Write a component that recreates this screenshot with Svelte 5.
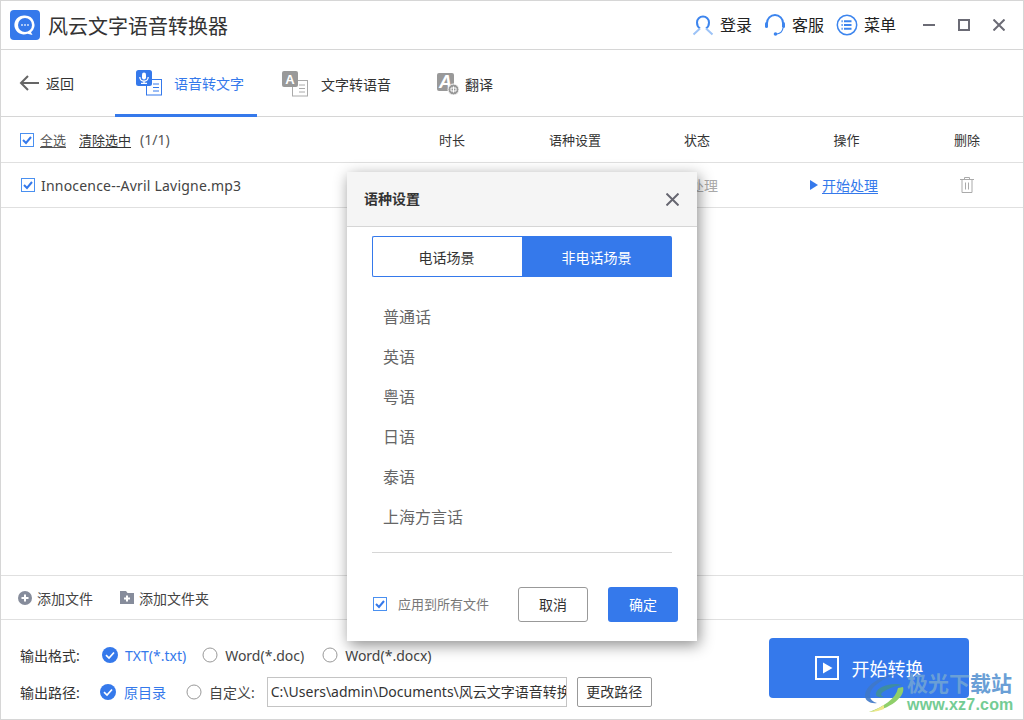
<script lang="ts">
  const languages = ["普通话", "英语", "粤语", "日语", "泰语", "上海方言话"];
</script>

{#snippet check()}
  <svg class="check" viewBox="0 0 14 14" width="14" height="14">
    <rect x="0.5" y="0.5" width="13" height="13" fill="#fff" stroke="#4a90f0" />
    <path d="M3 7l3 3 5-6" fill="none" stroke="#3579eb" stroke-width="2" />
  </svg>
{/snippet}

{#snippet radioOn()}
  <svg viewBox="0 0 16 16" width="16" height="16">
    <circle cx="8" cy="8" r="8" fill="#3579eb" />
    <path d="M4 8.200l3 2.800 5-5.500" fill="none" stroke="#fff" stroke-width="1.700" />
  </svg>
{/snippet}

{#snippet radioOff()}
  <svg viewBox="0 0 16 16" width="16" height="16">
    <circle cx="8" cy="8" r="7" fill="#fff" stroke="#999" />
  </svg>
{/snippet}

<div class="app">
  <header class="titlebar">
    <svg class="logo" viewBox="0 0 30 30" width="30" height="30">
      <rect width="30" height="30" rx="4" fill="#3579eb" />
      <path d="M15 5.500a9.500 9.500 0 0 1 6 16.800l1.500 2.700-5-1.300A9.500 9.500 0 1 1 15 5.500z" fill="#fff" />
      <circle cx="15" cy="15" r="7" fill="#3579eb" />
      <circle cx="12" cy="15" r="1" fill="#cfe0fb" />
      <circle cx="15" cy="15" r="1" fill="#cfe0fb" />
      <circle cx="18" cy="15" r="1" fill="#cfe0fb" />
    </svg>
    <h1>风云文字语音转换器</h1>
    <div class="account">
      <span class="acct">
        <svg viewBox="0 0 22 22" width="22" height="22" fill="none" stroke="#3d85ee" stroke-width="2">
          <path d="M8 14.500C5.500 12.800 5 10.500 5 8.500a6 6 0 0 1 12 0c0 2-.5 4.300-3 6" />
          <path d="M8 14.500 1.500 20.500M14 14.500l6.500 6" stroke="#9cc3f7" />
        </svg>
        <span>登录</span>
      </span>
      <span class="acct">
        <svg viewBox="0 0 22 22" width="22" height="22" fill="none" stroke="#3d85ee" stroke-width="2">
          <path d="M3 11V9a8 8 0 0 1 16 0v2" />
          <rect x="1" y="8" width="3" height="6" rx="1.500" fill="#3d85ee" stroke="none" />
          <rect x="18" y="8" width="3" height="6" rx="1.500" fill="#3d85ee" stroke="none" />
          <path d="M19 14c-.5 3.500-3 5.500-6 6" stroke-width="1.200" />
          <circle cx="11.500" cy="20" r="1.800" fill="#3d85ee" stroke="none" />
        </svg>
        <span>客服</span>
      </span>
      <span class="acct">
        <svg viewBox="0 0 22 22" width="22" height="22" fill="none" stroke="#3d85ee" stroke-width="1.500">
          <circle cx="11" cy="11" r="9.700" />
          <path d="M8 7.200h7.500M8 11h7.500M8 14.800h7.500M5.500 7.200h1.200M5.500 11h1.200M5.500 14.800h1.200" stroke-width="2" />
        </svg>
        <span>菜单</span>
      </span>
    </div>
    <div class="winbtns">
      <svg viewBox="0 0 12 12" width="12" height="12"><path d="M0 6h12" stroke="#6b6b75" stroke-width="2" /></svg>
      <svg viewBox="0 0 12 12" width="12" height="12"><rect x="1" y="1" width="10" height="10" fill="none" stroke="#6b6b75" stroke-width="2" /></svg>
      <svg viewBox="0 0 12 12" width="12" height="12"><path d="M.5.500l11 11M11.500.500l-11 11" stroke="#6b6b75" stroke-width="2" /></svg>
    </div>
  </header>

  <nav class="tabs">
    <div class="back">
      <svg viewBox="0 0 20 16" width="20" height="16" fill="none" stroke="#666" stroke-width="2">
        <path d="M20 8H2M9 1 2 8l7 7" />
      </svg>
      <span>返回</span>
    </div>
    <div class="tab active">
      <svg viewBox="0 0 26 26" width="26" height="26">
        <rect x="10.500" y="9.500" width="15" height="15.500" fill="#fff" stroke="#3579eb" />
        <path d="M17 14h6M17 17.500h6M17 21h6" stroke="#3579eb" />
        <rect width="16" height="16" rx="2.500" fill="#3579eb" />
        <rect x="6" y="2.500" width="4" height="7" rx="2" fill="#fff" />
        <path d="M3.800 7a4.200 4.200 0 0 0 8.400 0M8 11v2M5 13.300h6" fill="none" stroke="#fff" stroke-width="1.300" />
      </svg>
      <span>语音转文字</span>
    </div>
    <div class="tab second">
      <svg viewBox="0 0 26 26" width="26" height="26">
        <rect x="10.500" y="9.500" width="15" height="15.500" fill="#fff" stroke="#aaa" />
        <path d="M17 14h6M17 17.500h6M17 21h6" stroke="#aaa" />
        <rect width="16" height="16" rx="2" fill="#999" />
        <text x="8" y="12.500" class="glyph">A</text>
      </svg>
      <span>文字转语音</span>
    </div>
    <div class="tab third">
      <svg viewBox="0 0 22 22" width="22" height="22">
        <rect width="17" height="18" rx="2" fill="#999" />
        <text x="8.500" y="15" class="glyph big">A</text>
        <circle cx="16.500" cy="16.500" r="5.500" fill="#999" stroke="#fff" />
        <path d="M14 15h5v3h-5zM16.500 13.500v6" fill="none" stroke="#fff" />
      </svg>
      <span>翻译</span>
    </div>
  </nav>

  <div class="grid head">
    <div class="select">
      {@render check()}
      <u class="all">全选</u>
      <u class="clear">清除选中</u>
      <span class="count">(1/1)</span>
    </div>
    <span>时长</span>
    <span>语种设置</span>
    <span>状态</span>
    <span>操作</span>
    <span>删除</span>
  </div>

  <div class="grid row">
    <div class="file">
      {@render check()}
      <span>Innocence--Avril Lavigne.mp3</span>
    </div>
    <span></span>
    <span></span>
    <span class="status">待处理</span>
    <span class="action"><i class="tri"></i><u>开始处理</u></span>
    <span class="trash">
      <svg viewBox="0 0 14 16" width="14" height="16" fill="none" stroke="#aaa">
        <path d="M0 2.500h14M4.500 2.500V.5h5v2M2 2.500v13h10v-13M5.500 5.500v7M8.500 5.500v7" />
      </svg>
    </span>
  </div>

  <div class="spacer"></div>

  <div class="addbar">
    <span class="add">
      <svg viewBox="0 0 14 14" width="14" height="14">
        <circle cx="7" cy="7" r="7" fill="#868c9b" />
        <path d="M3.500 7h7M7 3.500v7" stroke="#fff" stroke-width="2" />
      </svg>
      添加文件
    </span>
    <span class="add">
      <svg viewBox="0 0 14 13" width="14" height="13">
        <path d="M0 0h6l1.500 2H14v11H0z" fill="#868c9b" />
        <path d="M4 7.500h6M7 4.500v6" stroke="#fff" stroke-width="2" />
      </svg>
      添加文件夹
    </span>
  </div>

  <footer class="output">
    <div class="settings">
      <div class="line format">
        <span class="label">输出格式:</span>
        <span class="opt on">{@render radioOn()}TXT(*.txt)</span>
        <span class="opt">{@render radioOff()}Word(*.doc)</span>
        <span class="opt">{@render radioOff()}Word(*.docx)</span>
      </div>
      <div class="line path">
        <span class="label">输出路径:</span>
        <span class="opt on">{@render radioOn()}原目录</span>
        <span class="opt">{@render radioOff()}自定义:</span>
        <div class="pathbox">C:\Users\admin\Documents\风云文字语音转换器</div>
        <button class="change">更改路径</button>
      </div>
    </div>
    <button class="start">
      <svg viewBox="0 0 24 24" width="24" height="24" fill="none">
        <rect x="1" y="1" width="22" height="22" stroke="#fff" stroke-width="2" />
        <path d="M8 6.500v11l9.500-5.500z" fill="#fff" />
      </svg>
      开始转换
    </button>
  </footer>

  <div class="dialog">
    <div class="dialog-head">
      <strong>语种设置</strong>
      <svg viewBox="0 0 12 12" width="13" height="13"><path d="M.5.500l11 11M11.500.500l-11 11" stroke="#666670" stroke-width="1.800" /></svg>
    </div>
    <div class="scene">
      <span>电话场景</span>
      <span class="current">非电话场景</span>
    </div>
    <ul>
      {#each languages as lang}
        <li>{lang}</li>
      {/each}
    </ul>
    <div class="dialog-foot">
      {@render check()}
      <span class="apply">应用到所有文件</span>
      <button class="cancel">取消</button>
      <button class="ok">确定</button>
    </div>
  </div>

  <div class="watermark">
    <svg viewBox="0 0 42 40" width="42" height="40">
      <path d="M33 1C19 2 2 11 1 22c-.5 6 6 9 12 8-6-2-9-6-6-12C11 10 23 4 33 1z" fill="#3f78c8" opacity=".9" />
      <path d="M38 12c-9-3-24 1-26 8-1 4 4 5 8 4-3-1-4-3-1-5 4-3 12-6 19-7z" fill="#3f8f9a" opacity=".9" />
      <path d="M39 14c3 9-13 23-34 25 14-5 27-13 29-24z" fill="#8fcf6a" />
      <path d="M20 32c-5 3-10 6-15 7 5 0 10-1 15-3z" fill="#efe88a" />
    </svg>
    <div class="mark-text">
      <b>极光下载站</b>
      <em>www.xz7.com</em>
    </div>
  </div>
</div>

<style>
  :global(body) {
    margin: 0;
    background: #fff;
  }

  .app {
    position: relative;
    box-sizing: border-box;
    width: 1024px;
    height: 720px;
    overflow: hidden;
    display: flex;
    flex-direction: column;
    border: 1px solid #d6d6d6;
    font-family: "Noto Sans", "Noto Sans CJK SC", sans-serif;
    font-size: 14px;
    color: #333;
    background: #fff;
  }

  svg {
    flex: none;
    display: block;
  }

  u {
    text-underline-offset: 2px;
  }

  .titlebar {
    height: 48px;
    flex: none;
    display: flex;
    align-items: center;
    padding-left: 9px;
    border-bottom: 1px solid #d6d6d6;
  }

  .logo {
    margin-top: -1px;
  }

  h1 {
    margin: 0 0 0 8px;
    font-size: 20px;
    font-weight: 400;
    color: #333;
  }

  .account {
    margin-left: auto;
    display: flex;
    gap: 12px;
    font-size: 16px;
    color: #222;
  }

  .acct {
    display: flex;
    align-items: center;
    gap: 6px;
  }

  .acct span {
    padding-bottom: 2px;
  }

  .winbtns {
    margin-left: 27px;
    margin-right: 18px;
    display: flex;
    gap: 23px;
  }

  .tabs {
    height: 67px;
    flex: none;
    display: flex;
    align-items: stretch;
    border-bottom: 1px solid #d6d6d6;
    box-sizing: border-box;
  }

  .back {
    width: 114px;
    box-sizing: border-box;
    padding-left: 18px;
    display: flex;
    align-items: center;
    gap: 7px;
  }

  .tab {
    display: flex;
    align-items: center;
    gap: 13px;
    box-sizing: border-box;
    padding-top: 2px;
  }

  .active {
    width: 142px;
    padding-left: 21px;
    gap: 12px;
    color: #3579eb;
    border-bottom: 3px solid #3579eb;
    margin-bottom: -1px;
    height: 67px;
  }

  .second {
    margin-left: 25px;
  }

  .third {
    margin-left: 46px;
    gap: 6px;
  }

  .glyph {
    font-family: "Liberation Sans", sans-serif;
    font-size: 13px;
    font-weight: 700;
    fill: #fff;
    text-anchor: middle;
  }

  .glyph.big {
    font-size: 18px;
    font-style: italic;
  }

  .grid {
    display: grid;
    grid-template-columns: 391px 120px 126px 118px 181px 60px;
    align-items: center;
    justify-items: center;
    flex: none;
    border-bottom: 1px solid #e0e0e0;
    font-size: 13px;
  }

  .head {
    height: 45px;
  }

  .row {
    height: 44px;
  }

  .select,
  .file {
    justify-self: start;
    display: flex;
    align-items: center;
  }

  .select {
    padding-left: 19px;
  }

  .all {
    margin-left: 6px;
    color: #555;
  }

  .clear {
    margin-left: 13px;
  }

  .count {
    margin-left: 9px;
    color: #555;
    font-size: 14px;
  }

  .file {
    padding-left: 20px;
    gap: 6px;
    font-size: 14px;
    letter-spacing: 0.2px;
    color: #444;
  }

  .status {
    color: #aaa;
    font-size: 14px;
  }

  .action {
    display: flex;
    align-items: center;
    gap: 4px;
    font-size: 14px;
    color: #3579eb;
    padding-right: 5px;
  }

  .tri {
    width: 0;
    height: 0;
    border-left: 8px solid #3579eb;
    border-top: 5px solid transparent;
    border-bottom: 5px solid transparent;
  }

  .spacer {
    flex: 1;
  }

  .addbar {
    height: 45px;
    flex: none;
    box-sizing: border-box;
    display: flex;
    align-items: center;
    gap: 27px;
    padding-left: 17px;
    border-top: 1px solid #e0e0e0;
    border-bottom: 1px solid #e0e0e0;
    color: #444;
  }

  .add {
    display: flex;
    align-items: center;
    gap: 5px;
  }

  .output {
    height: 99px;
    flex: none;
    display: flex;
    align-items: flex-start;
  }

  .settings {
    padding: 20px 0 0 19px;
  }

  .line {
    display: flex;
    align-items: center;
    height: 30px;
  }

  .path {
    margin-top: 7px;
  }

  .label {
    width: 60px;
    color: #333;
  }

  .opt {
    display: flex;
    align-items: center;
    gap: 7px;
    color: #444;
  }

  .on {
    color: #3579eb;
  }

  .format .opt {
    margin-left: 22px;
  }

  .format .opt + .opt {
    margin-left: 16px;
  }

  .format .opt:last-child {
    margin-left: 18px;
  }

  .path .on {
    gap: 8px;
    margin-left: 20px;
  }

  .path .opt + .opt {
    margin-left: 20px;
  }

  .pathbox {
    box-sizing: border-box;
    width: 300px;
    height: 30px;
    margin-left: 12px;
    padding: 0 3px;
    line-height: 28px;
    white-space: nowrap;
    overflow: hidden;
    border: 1px solid #c4c4c4;
    color: #333;
  }

  button {
    font: inherit;
    cursor: pointer;
  }

  .change {
    width: 75px;
    height: 30px;
    margin-left: 10px;
    padding: 0 0 2px;
    background: #fff;
    color: #333;
    border: 1px solid #999;
    border-radius: 2px;
  }

  .start {
    width: 200px;
    height: 60px;
    margin: 18px 54px 0 auto;
    display: flex;
    align-items: center;
    justify-content: center;
    gap: 13px;
    background: #3579eb;
    color: #fff;
    border: 0;
    border-radius: 4px;
    font-size: 18px;
  }

  .dialog {
    position: absolute;
    left: 346px;
    top: 171px;
    width: 350px;
    height: 469px;
    background: #fff;
    box-shadow: 2px 4px 14px rgba(0, 0, 0, 0.45);
    display: flex;
    flex-direction: column;
  }

  .dialog-head {
    height: 54px;
    flex: none;
    display: flex;
    align-items: center;
    justify-content: space-between;
    padding: 0 18px 0 17px;
    background: #f5f5f5;
    border-bottom: 1px solid #d6d6d6;
    color: #333;
  }

  .dialog-head strong {
    padding-bottom: 2px;
  }

  .scene {
    margin: 9px 25px 0;
    height: 41px;
    flex: none;
    display: grid;
    grid-template-columns: 150px 150px;
    box-sizing: border-box;
  }

  .scene span {
    display: flex;
    align-items: center;
    justify-content: center;
    box-sizing: border-box;
    padding-right: 2px;
    border: 1px solid #3579eb;
    border-right: 0;
    border-radius: 2px 0 0 2px;
  }

  .scene .current {
    background: #3579eb;
    color: #fff;
    border-radius: 0 2px 0 0;
  }

  ul {
    list-style: none;
    margin: 21px 25px 0;
    padding: 0 0 14px 11px;
    flex: none;
    border-bottom: 1px solid #d6d6d6;
    font-size: 16px;
    color: #666;
  }

  li {
    height: 40px;
    line-height: 39px;
  }

  .dialog-foot {
    display: flex;
    align-items: center;
    margin-top: 34px;
    padding-left: 26px;
  }

  .dialog-foot .check {
    margin-bottom: 2px;
  }

  .apply {
    margin-left: 11px;
    padding-bottom: 2px;
    font-size: 13px;
    color: #777;
  }

  .cancel,
  .ok {
    width: 70px;
    height: 35px;
    padding: 0 0 2px;
    border-radius: 3px;
  }

  .cancel {
    margin-left: 29px;
    background: #fff;
    color: #333;
    border: 1px solid #999;
  }

  .ok {
    margin-left: 20px;
    background: #3579eb;
    color: #fff;
    border: 0;
  }

  .watermark {
    position: absolute;
    left: 863px;
    top: 669px;
    display: flex;
    gap: 1px;
    pointer-events: none;
  }

  .watermark svg {
    margin-top: 3px;
  }

  .mark-text {
    display: flex;
    flex-direction: column;
  }

  .mark-text b {
    font-size: 21px;
    line-height: 26px;
    color: #6a9fd6;
  }

  .mark-text em {
    font-family: "Liberation Sans", sans-serif;
    font-style: normal;
    font-weight: 700;
    font-size: 16px;
    letter-spacing: 0.2px;
    line-height: 18px;
    color: #74cc94;
  }
</style>
